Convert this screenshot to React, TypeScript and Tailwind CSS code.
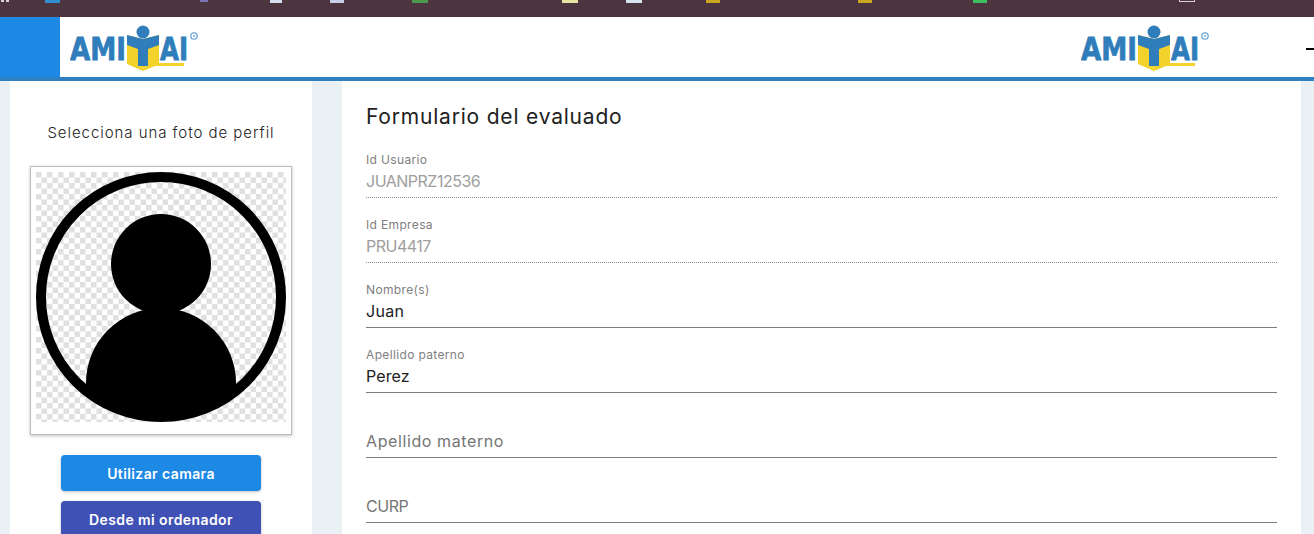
import React from 'react';

function Logo({ className }: { className: string }) {
  return (
    <svg viewBox="0 0 128 48" className={className}>
      <text x="0" y="35" textLength="56" lengthAdjust="spacingAndGlyphs" fontFamily="'DejaVu Sans', sans-serif" fontWeight="700" fontSize="32" fill="#2f7dbb" stroke="#2f7dbb" strokeWidth="0.800">AMI</text>
      <text x="90" y="35" textLength="28" lengthAdjust="spacingAndGlyphs" fontFamily="'DejaVu Sans', sans-serif" fontWeight="700" fontSize="32" fill="#2f7dbb" stroke="#2f7dbb" strokeWidth="0.800">AI</text>
      <path d="M57 10 L73 14 L89 10 V38 L73 43 L57 38 Z" fill="#f3d22b" />
      <path d="M57 39 L73 46 L85 41 H114 V38 H84 L73 43 L57 36 Z" fill="#f3d22b" />
      <circle cx="73" cy="7" r="6.500" fill="#2f7dbb" />
      <path d="M57 10 L73 14 L89 10 V20 L78 24 V41 H68 V24 L57 20 Z" fill="#2f7dbb" />
      <circle cx="124" cy="11" r="3.200" fill="none" stroke="#6aa5d6" strokeWidth="1.300" />
      <circle cx="124" cy="11" r="1" fill="#6aa5d6" />
    </svg>
  );
}

function Avatar() {
  return (
    <svg viewBox="0 0 250 250" className="w-[250px] h-[250px]">
      <defs>
        <pattern id="checker" width="11" height="11" patternUnits="userSpaceOnUse">
          <rect width="11" height="11" fill="#ffffff" />
          <rect width="5.500" height="5.500" fill="#e0e0e0" />
          <rect x="5.500" y="5.500" width="5.500" height="5.500" fill="#e0e0e0" />
        </pattern>
        <clipPath id="inner">
          <circle cx="125" cy="125" r="120" />
        </clipPath>
      </defs>
      <rect width="250" height="250" fill="url(#checker)" />
      <circle cx="125" cy="125" r="120" fill="none" stroke="#000" strokeWidth="10" />
      <circle cx="125" cy="92" r="50" fill="#000" />
      <circle cx="125" cy="211" r="75" fill="#000" clipPath="url(#inner)" />
    </svg>
  );
}

const fields = [
  { label: 'Id Usuario', value: 'JUANPRZ12536', tone: 'text-[#9e9e9e] tracking-[-0.5px]', line: 'border-dotted border-[#8a8a8a]' },
  { label: 'Id Empresa', value: 'PRU4417', tone: 'text-[#9e9e9e] tracking-[-0.5px]', line: 'border-dotted border-[#8a8a8a]' },
  { label: 'Nombre(s)', value: 'Juan', tone: 'text-[#212121] tracking-[0.3px]', line: 'border-[#7d7d7d]' },
  { label: 'Apellido paterno', value: 'Perez', tone: 'text-[#212121] tracking-[0.1px]', line: 'border-[#7d7d7d]' },
  { label: '', value: 'Apellido materno', tone: 'text-[#757575] tracking-[0.6px]', line: 'border-[#7d7d7d]' },
  { label: '', value: 'CURP', tone: 'text-[#757575] tracking-[-0.45px]', line: 'border-[#7d7d7d]' },
];

export default function App() {
  return (
    <div className="h-[534px] w-[1314px] overflow-hidden bg-[#eaf1f5] font-['Inter',sans-serif] text-[#212121]">
      {/* browser bookmarks strip, cut off by the capture */}
      <div className="h-[17px] bg-[#4d3540] flex items-start">
        <div className="w-[3px] h-[2px] bg-[#d8d0d4] ml-[1px]" />
        <div className="w-[3px] h-[2px] bg-[#d8d0d4] ml-[2px]" />
        <div className="w-[15px] h-[3px] bg-[#2f8fd0] ml-[36px]" />
        <div className="w-[8px] h-[2px] bg-[#7a74b0] ml-[140px]" />
        <div className="w-[12px] h-[3px] bg-[#d8e0f0] ml-[62px]" />
        <div className="w-[14px] h-[3px] bg-[#c8cde8] ml-[48px]" />
        <div className="w-[16px] h-[3px] bg-[#4d9a4d] ml-[68px]" />
        <div className="w-[16px] h-[3px] bg-[#e8e6a0] ml-[134px]" />
        <div className="w-[16px] h-[3px] bg-[#d8e4f0] ml-[48px]" />
        <div className="w-[14px] h-[3px] bg-[#c8a820] ml-[64px]" />
        <div className="w-[14px] h-[3px] bg-[#c8a820] ml-[138px]" />
        <div className="w-[14px] h-[3px] bg-[#3fbf5f] ml-[101px]" />
        <div className="w-[16px] h-[2px] border-x border-b border-[#d8d0d4] ml-[192px]" />
      </div>

      {/* top bar */}
      <header className="h-[64px] bg-white border-b-4 border-[#2f80c2] flex">
        <div className="w-[60px] h-[60px] bg-[#1e88e5]" />
        <Logo className="w-[128px] h-[48px] ml-[10px] mt-[8px]" />
        <Logo className="w-[128px] h-[48px] ml-[883px] mt-[8px]" />
        <div className="w-[8px] h-[2px] bg-black ml-[97px] mt-[31px]" />
      </header>

      <div className="flex pl-[10px] pr-[13px] gap-[30px]">
        {/* foto de perfil */}
        <aside className="w-[302px] h-[460px] bg-white flex flex-col items-center pt-[42px]">
          <p className="text-[15px] leading-5 font-light tracking-[0.95px]">Selecciona una foto de perfil</p>
          <div className="mt-[23px] w-[262px] h-[269px] border border-[#bdbdbd] bg-white shadow-[0_1px_3px_rgba(0,0,0,0.25)] pt-[5px] pl-[5px]">
            <Avatar />
          </div>
          <button className="mt-[20px] w-[200px] h-[36px] shrink-0 rounded bg-[#1e88e5] text-white text-[14px] tracking-[0.4px] font-semibold shadow-[0_1px_3px_rgba(0,0,0,0.25)]">
            Utilizar camara
          </button>
          <button className="mt-[10px] w-[200px] h-[36px] shrink-0 rounded bg-[#3f51b5] text-white text-[14px] tracking-[0.4px] font-semibold shadow-[0_1px_3px_rgba(0,0,0,0.25)]">
            Desde mi ordenador
          </button>
        </aside>

        {/* formulario */}
        <main className="flex-1 bg-white pl-[24px] pr-[24px] h-[460px]">
          <h1 className="mt-[24px] text-[21px] leading-6 tracking-[0.8px]">Formulario del evaluado</h1>
          <div className="mt-[23px] flex flex-col gap-[19px]">
            {fields.map((f) => (
              <div key={f.value} className={`h-[46px] flex flex-col border-b ${f.line}`}>
                <span className="h-[17px] text-[12px] leading-[15px] tracking-[0.35px] text-[#808080]">{f.label}</span>
                <span className={`text-[16px] leading-6 ${f.tone}`}>{f.value}</span>
              </div>
            ))}
          </div>
        </main>
      </div>
    </div>
  );
}
